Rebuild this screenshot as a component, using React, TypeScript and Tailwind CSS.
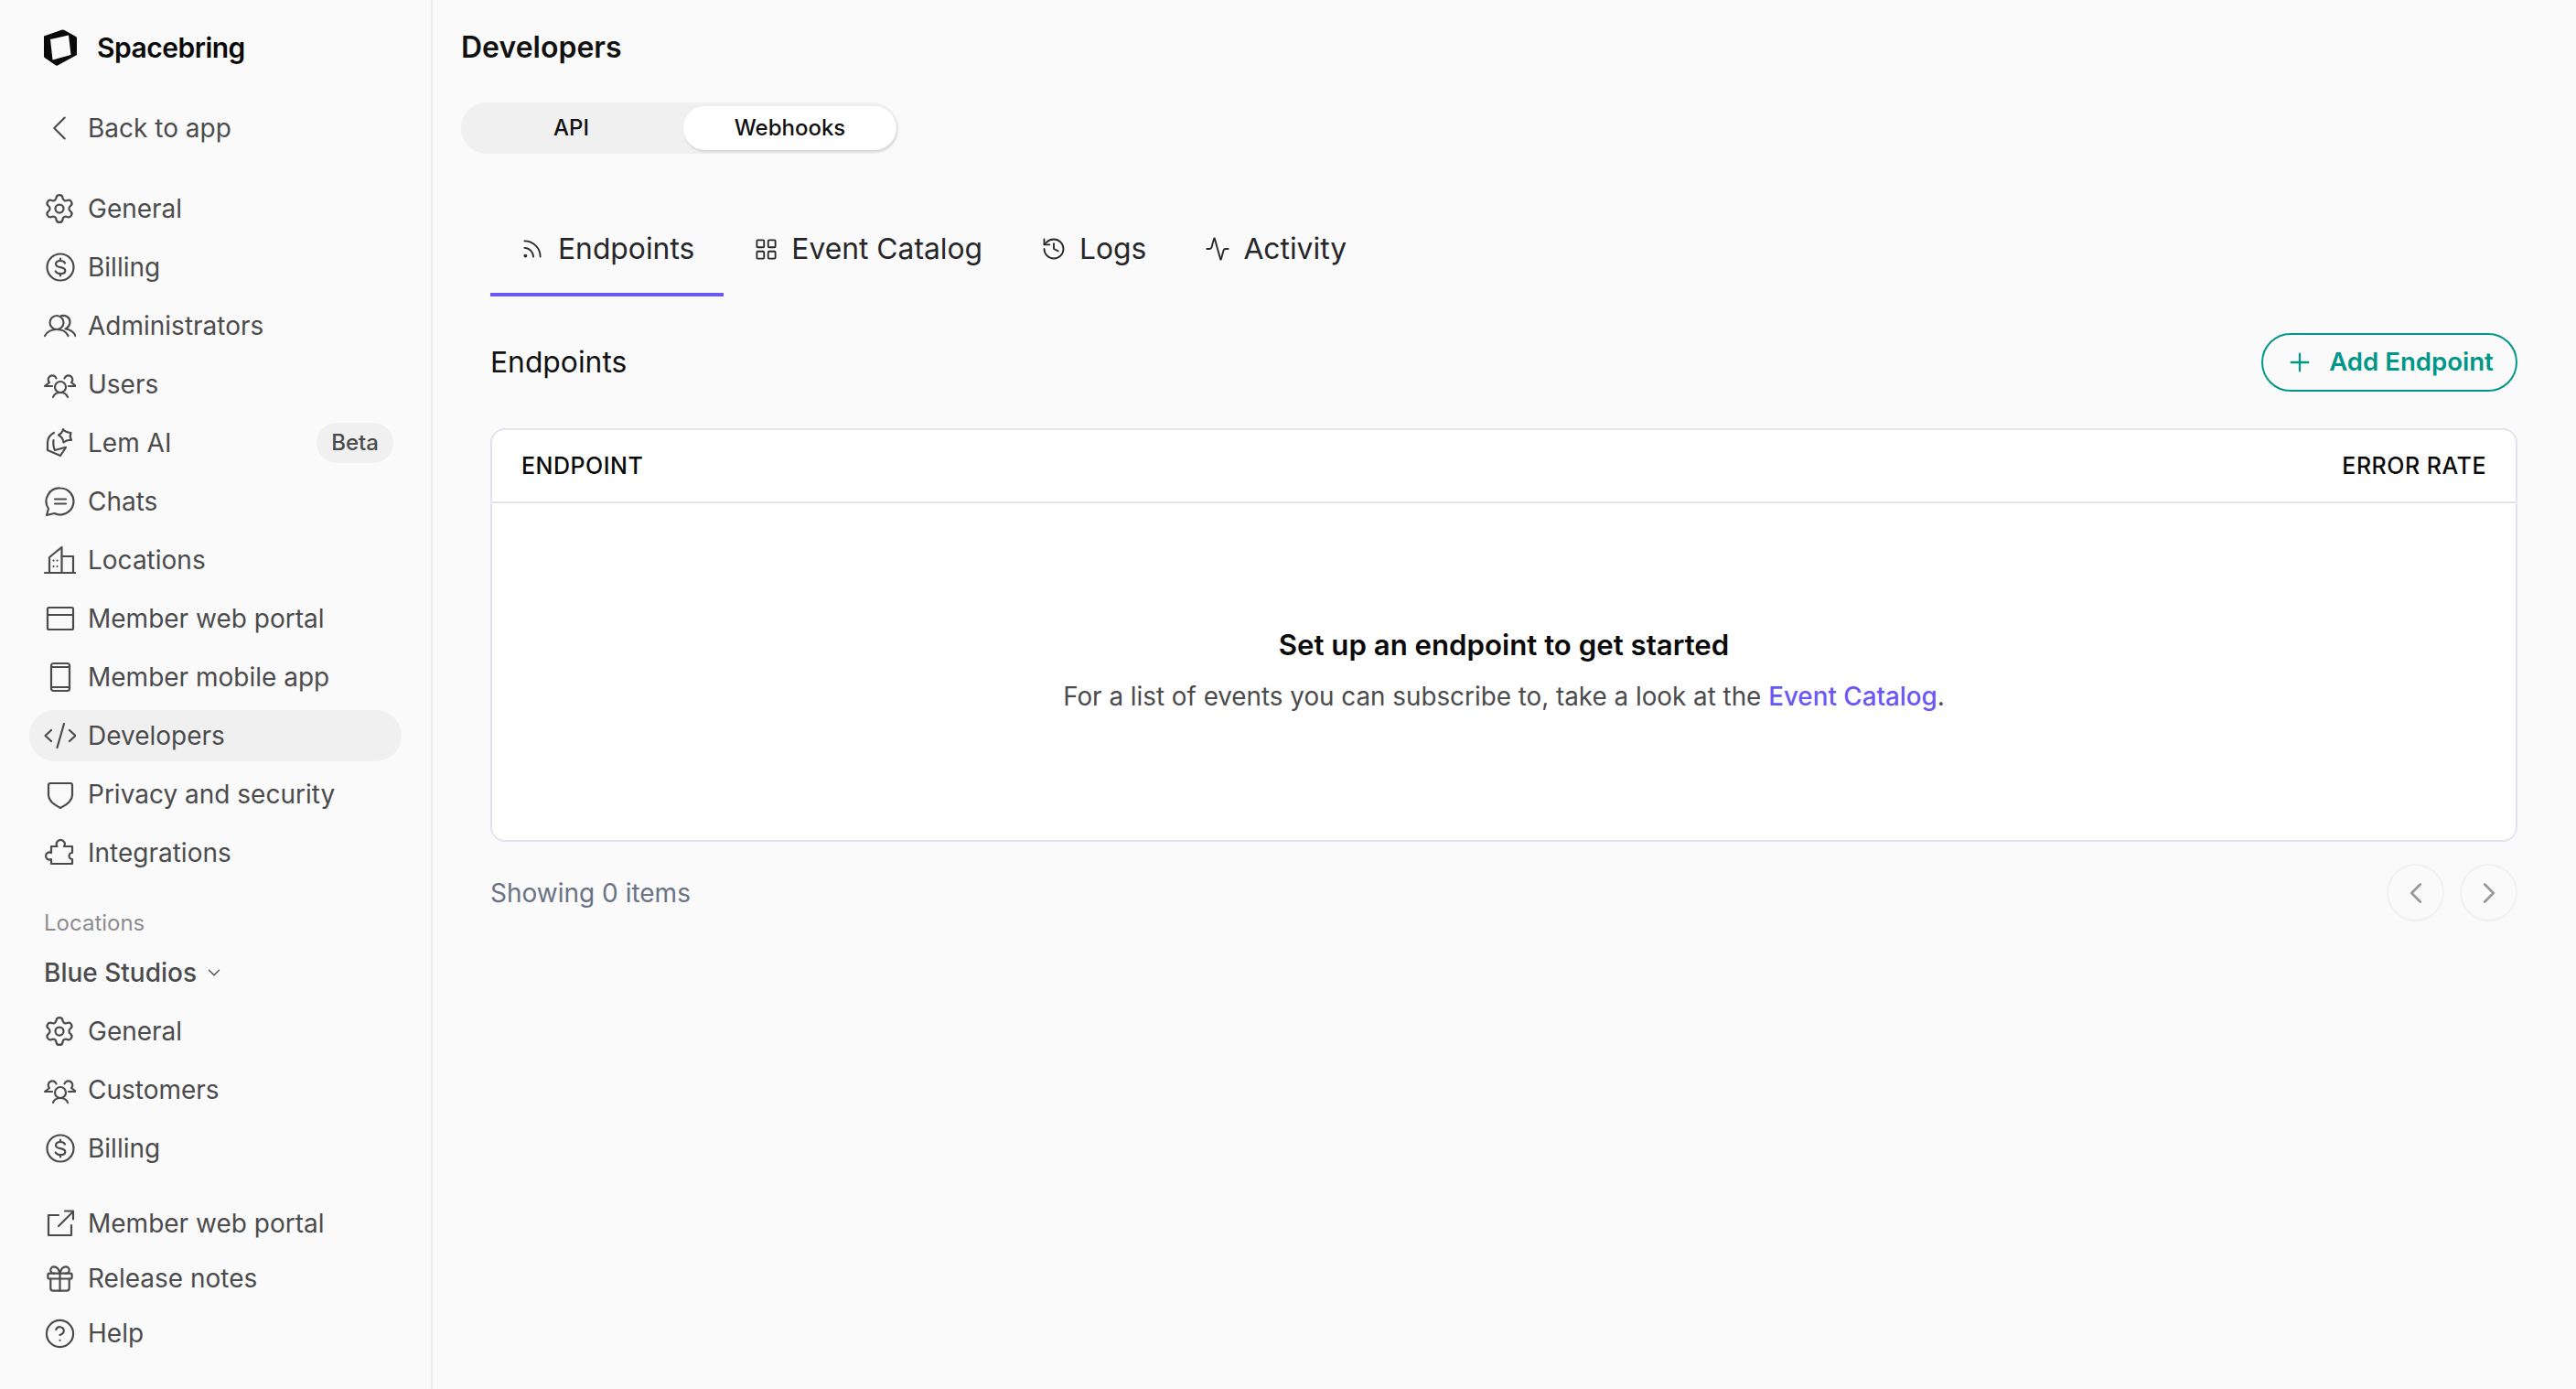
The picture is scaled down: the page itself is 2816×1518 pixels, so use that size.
import type { ReactNode } from "react";
import {
  Activity,
  ChevronDown,
  ChevronLeft,
  ChevronRight,
  CircleHelp,
  Gift,
  History,
  LayoutGrid,
  Plus,
  Rss,
  Settings,
} from "lucide-react";

const Glyph = ({ children }: { children: ReactNode }) => (
  <svg
    viewBox="0 0 36 36"
    fill="none"
    stroke="currentColor"
    strokeWidth="2.2"
    strokeLinecap="round"
    strokeLinejoin="round"
    className="w-[36px] h-[36px] shrink-0"
  >
    {children}
  </svg>
);

const GearIcon = () => (
  <span className="w-[36px] h-[36px] shrink-0 flex items-center justify-center">
    <Settings size={36} strokeWidth={1.5} />
  </span>
);
const DollarIcon = () => (
  <Glyph>
    <circle cx="19" cy="18" r="14.5" />
    <path d="M24 13.500c-.8-1.800-2.800-2.500-5-2.500-3 0-5 1.500-5 3.700 0 5 10.300 2 10.300 7 0 2.300-2.300 3.500-5.300 3.500-2.500 0-4.500-1-5.300-2.800" />
    <path d="M19 8.500V11M19 25v2.500" />
  </Glyph>
);
const AdminsIcon = () => (
  <Glyph>
    <circle cx="15" cy="14.500" r="7.500" />
    <path d="M2 29c2.500-4.500 7-7 13-7s10.500 2.500 12.500 7" />
    <path d="M20 7c4-.8 9.500 1 9.500 7 0 3.500-2.500 6-5 7.500 4.500.5 9 3 11 7.500" />
  </Glyph>
);
const UsersIcon = () => (
  <Glyph>
    <circle cx="19" cy="21" r="6" />
    <path d="M11 32c1-3 4-5 8-5s7 2 8 5" />
    <path d="M14.500 11.500A4.500 4.500 0 1 0 7 16l-5 4h8" />
    <path d="M23.500 11.500A4.500 4.500 0 1 1 31 16l5 4h-8" />
  </Glyph>
);
const LemIcon = () => (
  <Glyph>
    <path d="M12 7C8 9 5 13 5 18v8l14 6 6-9" />
    <path d="M11.500 15c-.5 4 0 8 1.500 11l11-3" />
    <path d="M22 3c1 2 3 3.500 8.500 4-1 2.500-1 5.500 .5 8-3-.5-6 .5-8.500 2.500C22 14 20 11 17 9.500 19.500 8 21.500 6 22 3Z" />
  </Glyph>
);
const ChatIcon = () => (
  <Glyph>
    <path d="M19 3.500a14.500 14.500 0 1 1-6.500 27.500L4 33l2-7A14.500 14.500 0 0 1 19 3.500Z" />
    <path d="M13 15.500h12M13 20.500h12" />
  </Glyph>
);
const BuildingIcon = () => (
  <Glyph>
    <path d="M2 32h34" />
    <path d="M7 32V15L20.500 4v28" />
    <path d="M20.500 14H33v18" />
    <path d="M11.500 18.500v.1M15.500 18.500v.1M11.500 25v.1M15.500 25v.1" />
  </Glyph>
);
const BrowserIcon = () => (
  <Glyph>
    <rect x="5" y="6" width="28" height="24" rx="1.500" />
    <path d="M5 14h28" />
  </Glyph>
);
const PhoneIcon = () => (
  <Glyph>
    <rect x="9" y="3" width="20" height="30" rx="2.500" />
    <path d="M9 7h20M9 29h20" />
  </Glyph>
);
const CodeIcon = () => (
  <Glyph>
    <path d="M9 12l-6.500 6L9 24" />
    <path d="M23 5l-7.500 26" />
    <path d="M29 12l6.500 6-6.500 6" />
  </Glyph>
);
const ShieldIcon = () => (
  <Glyph>
    <path d="M6 8a2 2 0 0 1 2-2h22a2 2 0 0 1 2 2v11c0 5-5 10-13 14C11 29 6 24 6 19Z" />
  </Glyph>
);
const PuzzleIcon = () => (
  <Glyph>
    <path d="M9 30v-5a4 4 0 1 1 0-7v-7h6.500a4.500 4.500 0 1 1 7.500 0h9v7a3.500 3.500 0 0 0 0 7v5Z" />
  </Glyph>
);
const ExternalIcon = () => (
  <Glyph>
    <path d="M17 9H6v22h25V20" />
    <path d="M17 21L33 5" />
    <path d="M24 4.500h9v9" />
  </Glyph>
);
const GiftIcon = () => (
  <span className="w-[36px] h-[36px] shrink-0 flex items-center justify-center">
    <Gift size={35} strokeWidth={1.5} />
  </span>
);
const HelpIcon = () => (
  <span className="w-[36px] h-[36px] shrink-0 flex items-center justify-center">
    <CircleHelp size={35} strokeWidth={1.5} />
  </span>
);

const Logo = () => (
  <svg viewBox="0 0 36 40" className="w-[36px] h-[40px] shrink-0">
    <path
      fillRule="evenodd"
      fill="#0a0a0a"
      d="M0 7.500 20 0.500c1-.3 2 0 2.500.5L35 8c.7.4 1 1 1 2v17c0 1-.5 1.500-1.300 1.800L15 39.500c-1 .3-1.500.2-2.300-.3L1.500 31.500C.5 31 0 30.300 0 29.500ZM7 11l20-4.500 2.500 21.500L9.500 33.500Z"
    />
  </svg>
);

function NavItem({
  icon,
  label,
  active,
  badge,
}: {
  icon: ReactNode;
  label: string;
  active?: boolean;
  badge?: string;
}) {
  return (
    <div
      className={
        "h-14 flex items-center gap-[13px] pl-[15px] pr-[9px] rounded-full text-[#4b4b4d] " +
        (active ? "bg-[#f0f0f0]" : "")
      }
    >
      {icon}
      <span className="flex-1 text-[28px]">{label}</span>
      {badge && (
        <span className="h-[44px] px-4 flex items-center rounded-full bg-[#f0f0f0] text-[24px] font-medium">
          {badge}
        </span>
      )}
    </div>
  );
}

function Tab({
  icon,
  label,
  active,
}: {
  icon: ReactNode;
  label: string;
  active?: boolean;
}) {
  return (
    <div
      className={
        "h-[100px] flex items-center gap-[14px] px-8 border-b-4 text-[31.8px] text-[#27272a] " +
        (active ? "border-[#6a57f5]" : "border-transparent")
      }
    >
      <span className="w-[28px] flex justify-center">{icon}</span>
      {label}
    </div>
  );
}

export default function App() {
  return (
    <div className="w-[2816px] h-[1518px] flex bg-[#fafafa] font-['Inter',sans-serif] overflow-hidden">
      <aside className="w-[473px] shrink-0 border-r-2 border-[#ececec] pl-8 pr-[32px] pt-8">
        <div className="h-10 flex items-center gap-[22px] pl-4">
          <Logo />
          <span className="text-[30px] font-semibold text-[#0a0a0a] tracking-[-0.5px]">
            Spacebring
          </span>
        </div>
        <div className="mt-10 h-14 flex items-center gap-[13px] pl-[15px] text-[#4b4b4d]">
          <span className="w-[36px] flex justify-center">
            <ChevronLeft size={46} strokeWidth={1.1} className="shrink-0" />
          </span>
          <span className="text-[28px]">Back to app</span>
        </div>
        <nav className="mt-8 flex flex-col gap-2">
          <NavItem icon={<GearIcon />} label="General" />
          <NavItem icon={<DollarIcon />} label="Billing" />
          <NavItem icon={<AdminsIcon />} label="Administrators" />
          <NavItem icon={<UsersIcon />} label="Users" />
          <NavItem icon={<LemIcon />} label="Lem AI" badge="Beta" />
          <NavItem icon={<ChatIcon />} label="Chats" />
          <NavItem icon={<BuildingIcon />} label="Locations" />
          <NavItem icon={<BrowserIcon />} label="Member web portal" />
          <NavItem icon={<PhoneIcon />} label="Member mobile app" />
          <NavItem icon={<CodeIcon />} label="Developers" active />
          <NavItem icon={<ShieldIcon />} label="Privacy and security" />
          <NavItem icon={<PuzzleIcon />} label="Integrations" />
        </nav>
        <div className="mt-[29px] h-10 flex items-center pl-4 text-[24px] text-[#8d8d90]">
          Locations
        </div>
        <div className="mt-[14px] h-10 flex items-center gap-2 pl-4 text-[#4b4b4d]">
          <span className="text-[28px] font-medium">Blue Studios</span>
          <ChevronDown size={22} strokeWidth={1.4} />
        </div>
        <div className="mt-4 flex flex-col gap-2">
          <NavItem icon={<GearIcon />} label="General" />
          <NavItem icon={<UsersIcon />} label="Customers" />
          <NavItem icon={<DollarIcon />} label="Billing" />
        </div>
        <div className="mt-[26px] flex flex-col gap-1">
          <NavItem icon={<ExternalIcon />} label="Member web portal" />
          <NavItem icon={<GiftIcon />} label="Release notes" />
          <NavItem icon={<HelpIcon />} label="Help" />
        </div>
      </aside>

      <main className="flex-1 pl-[31px] pr-16 pt-8">
        <h1 className="h-10 flex items-center text-[32px] font-semibold text-[#111]">
          Developers
        </h1>
        <div className="mt-10 w-[478px] h-14 flex items-center bg-[#f0f0f0] rounded-full pr-[2px] text-[24px] font-medium text-[#111]">
          <div className="w-[241px] mr-[2px] text-center">API</div>
          <div className="w-[233px] h-12 flex items-center justify-center bg-white rounded-full shadow-[1px_2px_3px_rgba(0,0,0,0.12)]">
            Webhooks
          </div>
        </div>

        <div className="pl-8">
          <div className="mt-14 flex">
            <Tab icon={<Rss size={26} strokeWidth={1.6} />} label="Endpoints" active />
            <Tab icon={<LayoutGrid size={27} strokeWidth={1.6} />} label="Event Catalog" />
            <Tab icon={<History size={28} strokeWidth={1.6} />} label="Logs" />
            <Tab icon={<Activity size={28} strokeWidth={1.6} />} label="Activity" />
          </div>

          <div className="mt-10 flex items-center justify-between">
            <h2 className="text-[31.8px] text-[#111]">Endpoints</h2>
            <button className="w-[280px] h-16 flex items-center justify-center gap-[16px] rounded-full border-2 border-[#009688] text-[#009688] text-[27.6px] font-semibold">
              <Plus size={32} strokeWidth={1.7} />
              Add Endpoint
            </button>
          </div>

          <div className="mt-10 h-[452px] flex flex-col bg-white border-2 border-[#e3e3ee] rounded-2xl">
            <div className="h-[80px] shrink-0 flex items-center justify-between pt-[2px] px-8 border-b-2 border-[#e3e3ee] text-[25px] font-medium tracking-[0.5px] text-[#0a0a0a]">
              <span>ENDPOINT</span>
              <span>ERROR RATE</span>
            </div>
            <div className="flex-1 flex flex-col items-center justify-center gap-[12px] pb-[4px]">
              <p className="text-[31.2px] font-semibold text-[#0a0a0a]">
                Set up an endpoint to get started
              </p>
              <p className="text-[27.8px] text-[#4b4b4d]">
                For a list of events you can subscribe to, take a look at the{" "}
                <span className="text-[#6a57f5] font-medium">Event Catalog</span>.
              </p>
            </div>
          </div>

          <div className="mt-6 flex items-center justify-between">
            <span className="text-[28px] text-[#6b7285]">Showing 0 items</span>
            <div className="flex gap-[17px]">
              <div className="w-[63px] h-[63px] flex items-center justify-center rounded-full border-2 border-[#f0f0f5] text-[#9a9a9e]">
                <ChevronLeft size={38} strokeWidth={1.8} />
              </div>
              <div className="w-[63px] h-[63px] flex items-center justify-center rounded-full border-2 border-[#f0f0f5] text-[#9a9a9e]">
                <ChevronRight size={38} strokeWidth={1.8} />
              </div>
            </div>
          </div>
        </div>
      </main>
    </div>
  );
}
